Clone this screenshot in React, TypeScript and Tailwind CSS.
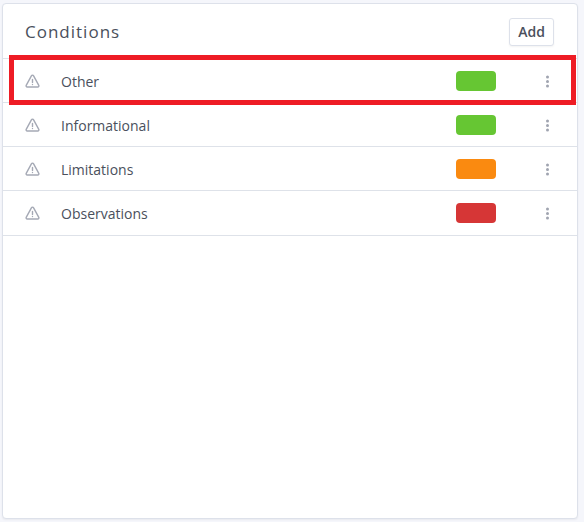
import React from 'react';

interface Condition {
  name: string;
  color: string;
  highlighted?: boolean;
}

const conditions: Condition[] = [
  { name: 'Other', color: 'bg-[#66c633]', highlighted: true },
  { name: 'Informational', color: 'bg-[#66c633]' },
  { name: 'Limitations', color: 'bg-[#fa8a10]' },
  { name: 'Observations', color: 'bg-[#d63636]' },
];

function WarningIcon() {
  return (
    <svg
      className="w-4 h-4 shrink-0 text-[#a5a9b5]"
      viewBox="0 0 16 16"
      fill="none"
      stroke="currentColor"
      strokeWidth="1.4"
      strokeLinecap="round"
      strokeLinejoin="round"
      aria-hidden="true"
    >
      <path d="M6.4 2.8 1.2 12.4a1.1 1.1 0 0 0 1 1.6h10.6a1.1 1.1 0 0 0 1-1.6L8.6 2.8a1.25 1.25 0 0 0-2.2 0Z" />
      <path d="M7.5 6.4v3M7.5 11.5v.1" />
    </svg>
  );
}

function DotsIcon() {
  return (
    <svg className="w-4 h-4" viewBox="0 0 16 16" fill="currentColor" aria-hidden="true">
      <circle cx="8.5" cy="4.1" r="1.5" />
      <circle cx="8.5" cy="8.5" r="1.5" />
      <circle cx="8.5" cy="12.9" r="1.5" />
    </svg>
  );
}

function ConditionRow({ name, color, highlighted }: Condition) {
  return (
    <li className="relative flex items-center pt-3 pb-[11px] last:pb-3 pl-[22px] pr-[22px] border-b border-[#dee2e9]">
      <WarningIcon />
      <span className="ml-5 flex-1 pt-0.5 text-sm leading-4">{name}</span>
      <span className={`w-10 h-5 rounded-[4px] ${color}`} />
      <button type="button" aria-label={`${name} options`} className="ml-[43px] text-[#a0a4b0]">
        <DotsIcon />
      </button>
      {highlighted && (
        <div className="absolute z-10 -top-1 -bottom-[3px] left-[6px] right-px border-[5px] border-[#ee1c25] pointer-events-none" />
      )}
    </li>
  );
}

export default function App() {
  return (
    <main className="min-h-screen flex flex-col bg-[#f5f6fb] pl-[2px] pr-[6px] py-[3px] font-['Segoe_UI','Open_Sans',sans-serif] text-[#4a505c]">
      <section className="flex-1 bg-white border border-[#dde1ea] rounded-[4px] shadow-xs">
        <header className="flex items-center justify-between h-[55px] pt-0.5 pl-[22px] pr-[23px] border-b border-[#dee2e9]">
          <h1 className="text-[17px] leading-6 tracking-[1px]">Conditions</h1>
          <button
            type="button"
            className="h-7 px-2 border border-[#dde1ea] rounded-[3px] bg-white text-sm leading-5 font-semibold shadow-xs"
          >
            Add
          </button>
        </header>
        <ul>
          {conditions.map((condition) => (
            <ConditionRow key={condition.name} {...condition} />
          ))}
        </ul>
      </section>
    </main>
  );
}
